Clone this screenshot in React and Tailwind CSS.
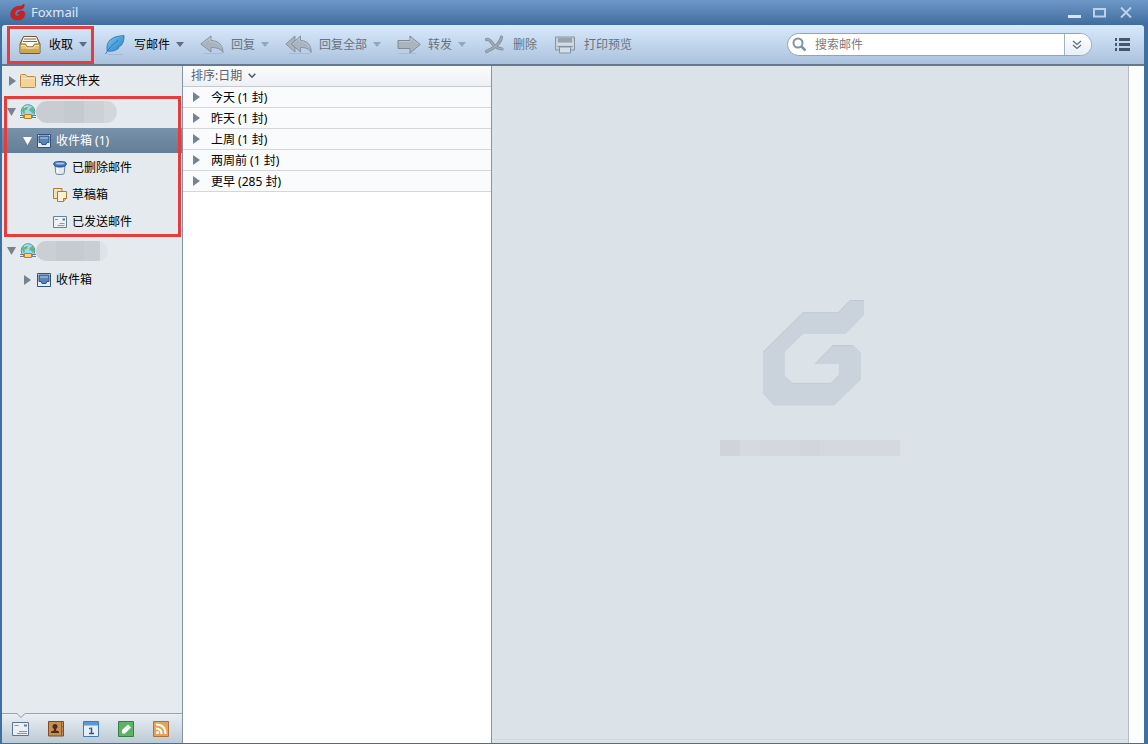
import React, { useState } from 'react';

const GLYPH = 'M0 155 L120 37 H225 L260 0 H302 V45 L247 101 H120 L65 155 V225 L90 249 H202 L227 225 V191 H155 L208 135 H270 L293 157 V237 L213 315 H32 L0 280 Z';

function Logo() {
  return (
    <svg width="16" height="18" viewBox="0 0 16 18" aria-hidden="true">
      <path d="M14 1C14.500 4.500 13 6.200 9.800 6.200 6.800 6.200 5 7.800 4.800 10.300c-.1 1.900.8 2.900 2.500 2.900 1.500 0 2.500-.8 2.700-2.200H7.500c.4-2 1.900-3 4-3 2.500 0 3.500 1.200 3.200 3.500-.5 3.600-3.200 5.500-7.200 5.500-4.500 0-6.800-2.100-6.600-6C1.200 6.500 4 3.700 8.600 3.400c2.600-.1 4.300-.8 5.400-2.400z" fill="#c8231f" stroke="#b3222a" strokeWidth=".8" />
    </svg>
  );
}

function InboxTray() {
  return (
    <svg width="22" height="20" viewBox="0 0 22 20" aria-hidden="true">
      <path d="M4.500 1.500h13L21 9v8.500q0 1-1 1H2q-1 0-1-1V9z" fill="#b08f4a" stroke="#6b5a35" />
      <path d="M5 2h12l3 7.500h-5l-1 2.500H8L7 9.500H2z" fill="#fbfaf5" />
      <path d="M5 4h12M4 6.500h14" stroke="#7d6c47" />
      <path d="M1.500 9H6q.8 0 1 .8.500 2 2 2h4q1.500 0 2-2 .2-.8 1-.8h4.500v8.500H1.500z" fill="#e2c374" />
      <path d="M1.500 14h19v3.500h-19z" fill="#cda654" />
      <path d="M1.500 9H6q.8 0 1 .8.500 2 2 2h4q1.500 0 2-2 .2-.8 1-.8h4.500" fill="none" stroke="#8a7038" />
      <path d="M2 10.500h4q.5 2.500 2.500 2.500h5q2 0 2.500-2.500h4" fill="none" stroke="#f5e3ac" />
    </svg>
  );
}

function Feather() {
  return (
    <svg width="20" height="20" viewBox="0 0 20 20" aria-hidden="true">
      <defs>
        <linearGradient id="plume" x1="0" y1="0" x2="1" y2="1">
          <stop offset="0" stopColor="#7cc6f2" />
          <stop offset="1" stopColor="#2480c8" />
        </linearGradient>
      </defs>
      <path d="M3 19.500h15" stroke="#9db3ca" opacity=".7" />
      <path d="M19 .5C12.500.8 6.500 2.500 3.800 6.500c-2 3-2.200 6-1.600 9.500 4.500.8 9-.3 12-3.500l-.8-.7 2.800-1.300C18.300 7.500 19.300 4.500 19 .5z" fill="url(#plume)" stroke="#2772ad" strokeWidth=".8" />
      <path d="M.5 19C3.500 14 7.500 9 13.500 5" fill="none" stroke="#2a75b0" strokeWidth=".9" />
    </svg>
  );
}

function Reply() {
  return (
    <svg width="24" height="20" viewBox="0 0 24 20" aria-hidden="true">
      <path d="M3 18.500h19" stroke="#9fb0c2" opacity=".6" />
      <path d="M.8 9 11 1v4.500c7.500.3 12 4.500 12 12-2.300-3.500-5.500-5-12-5V17z" fill="#a9b4c0" stroke="#8693a0" strokeLinejoin="round" />
      <path d="M2.500 9 10 3v3.500c6 .2 9.500 2.500 11.300 6" fill="none" stroke="#bcc6cf" />
    </svg>
  );
}

function ReplyAll() {
  return (
    <svg width="27" height="20" viewBox="0 0 27 20" aria-hidden="true">
      <path d="M4 18.500h21" stroke="#9fb0c2" opacity=".6" />
      <path d="M.8 9 10 1v4L7 9l3 4v4z" fill="#a9b4c0" stroke="#8693a0" strokeLinejoin="round" />
      <path d="M6.500 9 15.500 1v4.500c7 .3 10.700 4.500 10.700 12-2-3.500-4.700-5-10.700-5V17z" fill="#a9b4c0" stroke="#8693a0" strokeLinejoin="round" />
      <path d="M8 9l6.500-6v3.500c5.500.2 8.500 2.500 10 6" fill="none" stroke="#bcc6cf" />
    </svg>
  );
}

function Forward() {
  return (
    <svg width="24" height="20" viewBox="0 0 24 20" aria-hidden="true">
      <path d="M2 18.500h17" stroke="#9fb0c2" opacity=".6" />
      <path d="M1 5.500h12V1l10.200 8.500L13 18v-4.500H1z" fill="#a9b4c0" stroke="#7f8a95" strokeLinejoin="round" />
      <path d="M2 6.500h12V3l7.500 6.500" fill="none" stroke="#bcc6cf" />
    </svg>
  );
}

function Remove() {
  return (
    <svg width="20" height="19" viewBox="0 0 20 19" aria-hidden="true">
      <path d="M2.500 4.500C6 3 8 8.500 10.500 11c2.500 2 5 2.500 7.500 3M17.500 2C17 7 11 13 2.500 16.500" fill="none" stroke="#8592a0" strokeWidth="3.200" strokeLinecap="round" />
      <path d="M2.500 4.500C6 3 8 8.500 10.500 11c2.500 2 5 2.500 7.500 3M17.500 2C17 7 11 13 2.500 16.500" fill="none" stroke="#a0acb9" strokeWidth="1.400" strokeLinecap="round" />
    </svg>
  );
}

function Printer() {
  return (
    <svg width="22" height="18" viewBox="0 0 22 18" aria-hidden="true">
      <path d="M1.500 1h19v13h-19z" fill="#c5d0dc" stroke="#8793a1" />
      <path d="M4 2h14v4.500H4z" fill="#97a3b0" />
      <path d="M2.500 8h17" stroke="#e2e9f0" />
      <path d="M3.500 10.500h15" stroke="#8793a1" />
      <path d="M5.500 11h11v6h-11z" fill="#d3deea" stroke="#8793a1" />
    </svg>
  );
}

function FolderIcon() {
  return (
    <svg width="16" height="14" viewBox="0 0 16 14" aria-hidden="true">
      <path d="M.5 1.500q0-1 1-1h4l1.500 2h7.500q1 0 1 1v9q0 1-1 1h-13q-1 0-1-1z" fill="#f5d296" stroke="#bd8b48" />
      <path d="M1.500 4.500h13" stroke="#fbe6bd" />
    </svg>
  );
}

function Globe() {
  return (
    <svg width="16" height="16" viewBox="0 0 16 16" aria-hidden="true">
      <circle cx="8" cy="7.500" r="6.800" fill="#9ed8f0" stroke="#4c94b4" />
      <path d="M2 6.500Q3 3 6.500 1.500L9 2.500 7 4l.5 1.500-3 1L5 9l-1.500 1z" fill="#62b878" />
      <path d="M10 4.500 12.500 3Q14.500 5 14.300 8L12.500 10 11 7.500 9 7z" fill="#62b878" />
      <path d="M4 3.500Q6 2 8.500 2" fill="none" stroke="#dff5fb" />
      <path d="M0 13.500h4M12 13.500h4M0 11.500h4M12 11.500h4" stroke="#6a7f8d" />
      <path d="M4.500 10.500h7v4h-7z" fill="#fbd27a" stroke="#bc7e27" />
    </svg>
  );
}

function InboxIcon() {
  return (
    <svg width="14" height="14" viewBox="0 0 14 14" aria-hidden="true">
      <path d="M.5.5h13v13H.5z" fill="#e4edf7" stroke="#31527f" />
      <path d="M2 2h10v6.500H9.800L9 10.500H5l-.8-2H2z" fill="#5c83b5" stroke="#2f5284" />
      <path d="M3 3h8v2H3z" fill="#86a9d2" />
    </svg>
  );
}

function TrashIcon() {
  return (
    <svg width="14" height="14" viewBox="0 0 14 14" aria-hidden="true">
      <path d="M2 4.500h10l-.8 8q-.2 1-4.200 1t-4.200-1z" fill="#e4ebf3" stroke="#71849b" />
      <path d="M4.500 7v5" stroke="#fff" strokeWidth="1.500" />
      <path d="M.7 2.500C.7 1.200 3 .5 7 .5s6.300.7 6.300 2-.3 3.500-6.300 3.500-6.300-2.200-6.300-3.500z" fill="#3e74bd" stroke="#28518d" />
      <ellipse cx="7" cy="2.500" rx="4.500" ry="1" fill="#a9c9ed" />
    </svg>
  );
}

function DraftIcon() {
  return (
    <svg width="14" height="14" viewBox="0 0 14 14" aria-hidden="true">
      <path d="M.5.5h8.500v10H.5z" fill="#f6dfb6" stroke="#b07c3a" />
      <path d="M4.500 3.500h9v7l-3 3h-6z" fill="#fcf1d9" stroke="#a87a3c" />
      <path d="M13.500 10.500h-3v3" fill="#e5c083" stroke="#a87a3c" />
    </svg>
  );
}

function SentIcon() {
  return (
    <svg width="14" height="12" viewBox="0 0 14 12" aria-hidden="true">
      <path d="M.5.500h13v11H.5z" fill="#eef3f7" stroke="#6b7f92" />
      <path d="M2 3.500h3M6.500 7.500h5M4.500 9.500h7" stroke="#7c9cb9" />
      <path d="M9.500 2.500h2.500v2H9.500z" fill="#56789b" />
    </svg>
  );
}

function Caret({ className }) {
  return (
    <svg className={className} width="8" height="5" viewBox="0 0 8 5" aria-hidden="true">
      <path d="M0 0h8L4 5z" fill="currentColor" />
    </svg>
  );
}

function Arrow({ open }) {
  return open ? (
    <svg width="9" height="8" viewBox="0 0 9 8" aria-hidden="true">
      <path d="M0 0h9L4.500 8z" fill="currentColor" />
    </svg>
  ) : (
    <svg width="9" height="10" viewBox="0 0 9 10" aria-hidden="true">
      <path d="M1 0v10l7-5z" fill="currentColor" />
    </svg>
  );
}

const tools = [
  { label: '写邮件', icon: <Feather />, menu: true },
  { label: '回复', icon: <Reply />, menu: true, disabled: true },
  { label: '回复全部', icon: <ReplyAll />, menu: true, disabled: true },
  { label: '转发', icon: <Forward />, menu: true, disabled: true },
  { label: '删除', icon: <Remove />, disabled: true },
  { label: '打印预览', icon: <Printer />, disabled: true },
];

function ToolButton({ label, icon, menu, disabled }) {
  return (
    <button
      type="button"
      disabled={disabled}
      className={disabled ? 'flex items-center whitespace-nowrap text-[#69727c]' : 'flex items-center whitespace-nowrap text-black'}
    >
      <span className="flex min-w-6 justify-center">{icon}</span>
      <span className="ml-[7px]">{label}</span>
      {menu && <Caret className={disabled ? 'ml-[6px] text-[#93a7bf]' : 'ml-[6px] text-[#5a6f86]'} />}
    </button>
  );
}

function AccountRow({ wide }) {
  return (
    <button type="button" aria-label="account" className="flex h-8 w-full items-center pb-px pl-[5px] text-[#75848f]">
      <Arrow open />
      <span className="ml-1 shrink-0"><Globe /></span>
      {wide ? (
        <span className="flex h-[22px] w-[81px] overflow-hidden rounded-full">
          <span className="w-7 bg-[#c9cdd1]" />
          <span className="w-5 bg-[#c5cace]" />
          <span className="w-5 bg-[#cdd1d5]" />
          <span className="flex-1 bg-[#d3d7da]" />
        </span>
      ) : (
        <span className="flex h-5 w-[72px] overflow-hidden rounded-full">
          <span className="w-5 bg-[#cbcfd3]" />
          <span className="w-7 bg-[#c6cbcf]" />
          <span className="w-4 bg-[#c9ced1]" />
          <span className="flex-1 bg-[#dfe3e7]" />
        </span>
      )}
    </button>
  );
}

function ChildRow({ icon, label }) {
  return (
    <button type="button" className="flex h-[27px] w-full items-center pl-[51px] text-black">
      <span className="flex w-[14px] justify-center">{icon}</span>
      <span className="ml-[5px]">{label}</span>
    </button>
  );
}

function Sidebar() {
  return (
    <aside className="flex w-[181px] shrink-0 flex-col border-r border-[#8493a2] bg-[#e5eaee]">
      <nav className="flex-1">
        <button type="button" className="flex h-[30px] w-full items-center pl-[6px] text-black">
          <span className="text-[#75848f]"><Arrow /></span>
          <span className="ml-[3px]"><FolderIcon /></span>
          <span className="ml-1">常用文件夹</span>
        </button>

        <div className="relative">
          <AccountRow wide />
          <button type="button" className="mb-px flex h-[25px] w-full items-center bg-linear-to-b from-[#7892ab] to-[#657e98] pl-[21px] text-white">
            <Arrow open />
            <span className="ml-[5px]"><InboxIcon /></span>
            <span className="ml-[5px]">收件箱 (1)</span>
          </button>
          <ChildRow icon={<TrashIcon />} label="已删除邮件" />
          <ChildRow icon={<DraftIcon />} label="草稿箱" />
          <ChildRow icon={<SentIcon />} label="已发送邮件" />
          <div className="pointer-events-none absolute -bottom-0.5 left-0.5 right-px top-0 border-3 border-[#e53c3c]" />
        </div>

        <AccountRow />
        <button type="button" className="flex h-[25px] w-full items-center pl-[21px] text-black">
          <span className="text-[#75848f]"><Arrow /></span>
          <span className="ml-[5px]"><InboxIcon /></span>
          <span className="ml-[5px]">收件箱</span>
        </button>
      </nav>
      <SideTabs />
    </aside>
  );
}

function SideTabs() {
  return (
    <div className="relative flex h-[30px] items-center gap-[19px] border-t border-[#97a5b1] bg-linear-to-b from-[#e9eff3] to-[#bccad5] pl-[10px]">
      <svg className="absolute -top-px left-[14px]" width="10" height="6" viewBox="0 0 10 6" aria-hidden="true">
        <path d="M0 0h10L5 5z" fill="#e5eaee" />
        <path d="M0 .5h1l4 4 4-4h1" fill="none" stroke="#8696a3" />
      </svg>
      <button type="button" aria-label="mail">
        <svg width="17" height="14" viewBox="0 0 17 14">
          <path d="M.5.500h16v13H.5z" fill="#e9f1f6" stroke="#5d748a" />
          <path d="M2.500 3.500h4M7 9.500h8M5 11.500h10" stroke="#6d9abf" />
          <path d="M12 2.500h3v2h-3z" fill="#5e7f9f" />
        </svg>
      </button>
      <button type="button" aria-label="contacts">
        <svg width="16" height="16" viewBox="0 0 16 16">
          <path d="M.5.500h15v14.500H.5z" fill="#c98e55" stroke="#7d4b25" />
          <path d="M13.500 1v14M13.500 5.500h2M13.500 10h2" stroke="#8c5b30" />
          <circle cx="7" cy="5.500" r="2.500" fill="#4d2d15" />
          <path d="M6 7h2v2.500l3 1V12H3v-1.500l3-1z" fill="#4d2d15" />
        </svg>
      </button>
      <button type="button" aria-label="calendar">
        <svg width="16" height="16" viewBox="0 0 16 16">
          <path d="M.5.500h15v15H.5z" fill="#e4eff9" stroke="#4479b1" />
          <path d="M1 1h14v3.500H1z" fill="#5c97d8" />
          <path d="M6 7.500h1.500M6 12.500h5M8.500 6.500v6" stroke="#35597e" strokeWidth="1.500" />
        </svg>
      </button>
      <button type="button" aria-label="notes">
        <svg width="16" height="16" viewBox="0 0 16 16">
          <path d="M.5.500h15v15H.5z" fill="#5eb266" stroke="#3a7d46" />
          <path d="M4 12.500V9l6-5.500L13 6.500 7 12.500z" fill="#fff" />
        </svg>
      </button>
      <button type="button" aria-label="rss">
        <svg width="16" height="16" viewBox="0 0 16 16">
          <path d="M.5.500h15v15H.5z" fill="#e6a35a" stroke="#b0713a" />
          <circle cx="4.500" cy="11.500" r="1.500" fill="#fff" />
          <path d="M3 7.500q5.500 0 5.500 5.500M3 3.500q9.500 0 9.500 9.500" fill="none" stroke="#fff" strokeWidth="2" />
        </svg>
      </button>
    </div>
  );
}

const groups = ['今天 (1 封)', '昨天 (1 封)', '上周 (1 封)', '两周前 (1 封)', '更早 (285 封)'];

function MailList() {
  return (
    <section className="w-[309px] shrink-0 border-r border-[#8a949e] bg-white">
      <button type="button" className="flex h-[21px] w-full items-center border-b border-[#c3c9ce] bg-linear-to-b from-[#fafbfc] to-[#eef1f4] pl-2 text-[#59636d]">
        排序:日期
        <svg className="ml-[6px]" width="8" height="6" viewBox="0 0 8 6" aria-hidden="true">
          <path d="M.7.7 4 4.200 7.300.7" fill="none" stroke="#4c5760" strokeWidth="1.500" />
        </svg>
      </button>
      <ul>
        {groups.map((group) => (
          <li key={group}>
            <button type="button" className="flex h-[21px] w-full items-center border-b border-[#d3d7da] bg-[#fafbfd] pl-[9px] text-black">
              <span className="text-[#75848f]"><Arrow /></span>
              <span className="ml-[10px] pt-0.5">{group}</span>
            </button>
          </li>
        ))}
      </ul>
    </section>
  );
}

function Preview() {
  return (
    <main className="flex min-w-0 flex-1 flex-col bg-[#dbe2e8]">
      <div className="flex flex-1 flex-col items-center justify-center pb-[50px]">
        <svg className="ml-[7px]" width="101" height="106" viewBox="0 0 302 316" aria-hidden="true">
          <path d={GLYPH} fill="#cad2dc" />
          <path d="M0 155 L120 37 H225 L260 1 H302 M90 249 H202 L227 225 M155 191 L208 136 H270" fill="none" stroke="#bac3cd" strokeWidth="2" />
        </svg>
        <div className="mt-[34px] flex h-4 w-[180px] bg-[#d3d9df]">
          <span className="w-5 bg-[#ced4da]" />
          <span className="w-5 bg-[#d4dae0]" />
          <span className="w-10 bg-[#d2d8de]" />
          <span className="w-5 bg-[#d0d6dc]" />
        </div>
      </div>
      <div className="h-1 border-t border-[#d0d6dc]" />
    </main>
  );
}

export default function App() {
  const [keyword, setKeyword] = useState('');

  return (
    <div className="flex h-screen flex-col border-b border-l-2 border-r-4 border-[#40709f] bg-[#416d9e] font-['Noto_Sans','Noto_Sans_CJK_SC',sans-serif] text-xs leading-4">
      <header className="-ml-0.5 -mr-1 flex h-[25px] shrink-0 items-center bg-linear-to-b from-[#6e98c6] to-[#416d9e] pb-0.5 pl-[10px] pr-[14px]">
        <Logo />
        <h1 className="ml-[5px] text-[13px] leading-5 text-[#dce9f7]">Foxmail</h1>
        <div className="ml-auto flex items-center gap-3 pt-0.5 text-[#b9d2ee]">
          <button type="button" aria-label="minimize">
            <svg width="13" height="11" viewBox="0 0 13 11"><path d="M0 9.500h13" stroke="#d6e6f8" strokeWidth="3" /></svg>
          </button>
          <button type="button" aria-label="maximize">
            <svg width="13" height="11" viewBox="0 0 13 11"><path d="M1 2h11v7.500H1z" fill="none" stroke="currentColor" strokeWidth="2" /></svg>
          </button>
          <button type="button" aria-label="close">
            <svg width="16" height="11" viewBox="0 0 16 11"><path d="M3 .5l10 10M13 .5l-10 10" fill="none" stroke="currentColor" strokeWidth="2" /></svg>
          </button>
        </div>
      </header>

      <div className="flex h-[41px] shrink-0 items-center gap-4 rounded-t-[3px] border-b-2 border-[#65788e] bg-linear-to-b from-[#d8e9fa] to-[#abc2de] pl-4 pr-[14px]">
        <div className="relative">
          <ToolButton label="收取" icon={<InboxTray />} menu />
          <div className="pointer-events-none absolute -inset-y-[9px] -left-[11px] -right-[7px] border-3 border-[#e53c3c]" />
        </div>
        {tools.map((tool) => (
          <ToolButton key={tool.label} {...tool} />
        ))}

        <div className="ml-auto flex h-[23px] w-[305px] items-center overflow-hidden rounded-full border border-[#8fa5bd] bg-white">
          <svg className="ml-1 shrink-0" width="15" height="15" viewBox="0 0 15 15" aria-hidden="true">
            <circle cx="6" cy="6" r="4.500" fill="none" stroke="#7f94a8" strokeWidth="2" />
            <path d="M9.500 9.500l4 4" stroke="#7f94a8" strokeWidth="2.500" />
          </svg>
          <input
            type="text"
            aria-label="搜索邮件"
            placeholder="搜索邮件"
            value={keyword}
            onChange={(e) => setKeyword(e.target.value)}
            className="ml-2 min-w-0 flex-1 outline-none placeholder:text-[#7b7b7b]"
          />
          <button type="button" aria-label="more" className="flex h-full w-[27px] items-center border-l border-[#9fb2c6] bg-linear-to-b from-white to-[#e8eff7] pl-[7px]">
            <svg width="10" height="10" viewBox="0 0 10 10">
              <path d="M1 1l4 3.500L9 1M1 5l4 3.500L9 5" fill="none" stroke="#5c6c7e" strokeWidth="1.300" />
            </svg>
          </button>
        </div>
        <button type="button" aria-label="menu" className="ml-[7px]">
          <svg width="15" height="13" viewBox="0 0 15 13">
            <path d="M0 1.500h2M0 6.500h2M0 11.500h2M4 1.500h11M4 6.500h11M4 11.500h11" stroke="#43576f" strokeWidth="3" />
          </svg>
        </button>
      </div>

      <div className="flex min-h-0 flex-1">
        <Sidebar />
        <MailList />
        <Preview />
        <div className="w-4 shrink-0 border-l border-[#b4bbc2] bg-[#fcfdfd]" />
      </div>
    </div>
  );
}
